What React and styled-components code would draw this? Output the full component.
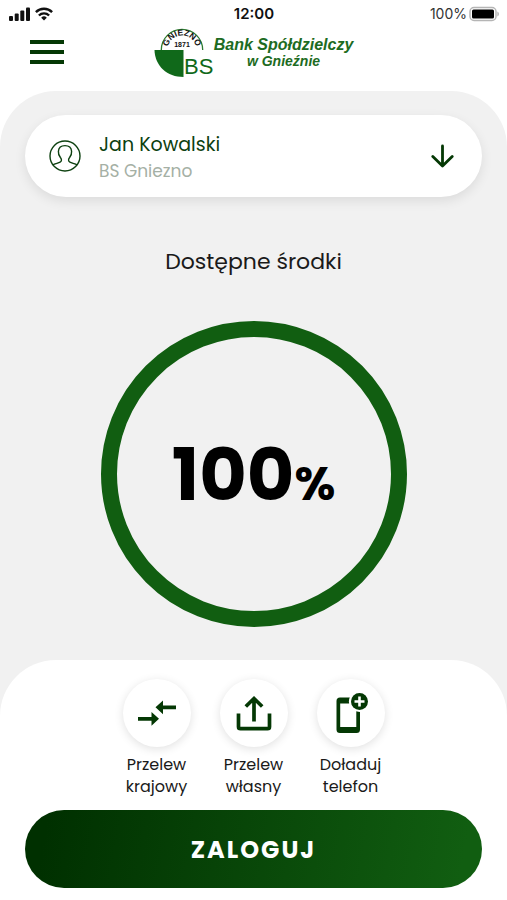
import React, { useState } from "react";
import styled, { createGlobalStyle } from "styled-components";

const GlobalStyle = createGlobalStyle`
  * {
    box-sizing: border-box;
  }
  body {
    margin: 0;
    background: #fff;
    color: #1a1a1a;
    font-family: Poppins, Inter, "Liberation Sans", sans-serif;
  }
  button {
    font-family: inherit;
    color: inherit;
    background: none;
    border: none;
    padding: 0;
    cursor: pointer;
  }
`;

const Screen = styled.div`
  display: flex;
  flex-direction: column;
  min-height: 100vh;
  background: #fff;
`;

const StatusBar = styled.div`
  display: grid;
  grid-template-columns: 1fr auto 1fr;
  align-items: center;
  height: 27px;
  padding: 0 7px 0 8px;
  font-family: Inter, sans-serif;
  font-size: 14px;
`;
const StatusGroup = styled.div`
  display: flex;
  align-items: center;
  gap: ${(props) => props.$gap};
  justify-content: ${(props) => props.$align || "flex-start"};
  color: #333;
`;
const Clock = styled.span`
  color: #111;
  font-size: 15px;
  font-weight: 600;
`;

const Header = styled.header`
  display: grid;
  grid-template-columns: 1fr auto 1fr;
  align-items: center;
  height: 64px;
  padding: 0 30px;
`;
const MenuButton = styled.button`
  display: flex;
  flex-direction: column;
  justify-content: space-between;
  width: 34px;
  height: 24px;
  margin-bottom: 14px;
`;
const MenuLine = styled.span`
  width: 100%;
  height: 4px;
  background: #043804;
`;
const Brand = styled.a`
  display: flex;
  align-items: center;
  margin-bottom: 12px;
  color: #1d6b22;
  text-decoration: none;
`;
const BrandName = styled.span`
  font-family: "Liberation Sans", Arial, sans-serif;
  font-weight: bold;
  font-style: italic;
  font-size: 16px;
  line-height: 16px;
  text-align: center;
`;
const BrandTown = styled.span`
  display: block;
  font-size: 14px;
`;

const Main = styled.main`
  flex: 1;
  display: flex;
  flex-direction: column;
  align-items: center;
  padding: 24px 25px 33px;
  background: #f1f1f1;
  border-radius: 56px 56px 0 0;
`;
const AccountButton = styled.button`
  display: flex;
  align-items: center;
  width: 100%;
  height: 82px;
  padding: 0 28px 0 24px;
  border-radius: 41px;
  background: #fff;
  box-shadow: 0 4px 12px rgba(0, 0, 0, 0.09);
  text-align: left;
`;
const AccountText = styled.span`
  flex: 1;
  display: flex;
  flex-direction: column;
  margin-left: 18px;
  padding-top: 3px;
  line-height: 27px;
`;
const Owner = styled.span`
  color: #0c400f;
  font-size: 19px;
`;
const BankName = styled.span`
  color: #a5b0a5;
  font-size: 17px;
`;

const Title = styled.h1`
  margin: 49px 0 43px;
  font-size: 22px;
  font-weight: 400;
  line-height: 32px;
`;
const Ring = styled.div`
  display: flex;
  align-items: center;
  justify-content: center;
  width: 306px;
  height: 306px;
  padding-top: 10px;
  border: 16px solid #115e11;
  border-radius: 50%;
  color: #000;
`;
const Amount = styled.span`
  font-size: 73px;
  font-weight: 700;
  line-height: 80px;
`;
const Percent = styled.span`
  font-size: 47px;
`;

const Panel = styled.footer`
  background: #f1f1f1;
`;
const PanelBody = styled.div`
  display: flex;
  flex-direction: column;
  gap: 12px;
  padding: 19px 25px 12px;
  background: #fff;
  border-radius: 56px 56px 0 0;
`;
const Actions = styled.nav`
  display: flex;
  justify-content: center;
  gap: 17px;
`;
const ActionButton = styled.button`
  display: flex;
  flex-direction: column;
  align-items: center;
  gap: 7px;
  width: 80px;
  font-size: 16px;
  line-height: 22px;
`;
const ActionIcon = styled.span`
  display: flex;
  align-items: center;
  justify-content: center;
  width: 68px;
  height: 68px;
  border-radius: 50%;
  background: #fff;
  color: #043804;
  box-shadow: 0 2px 10px rgba(0, 0, 0, 0.12);
`;
const LoginButton = styled.button`
  height: 78px;
  border-radius: 39px;
  background: linear-gradient(100deg, #003000 5%, #115e11 95%);
  color: #fff;
  font-size: 24px;
  font-weight: 700;
  letter-spacing: 2px;
`;

const SignalIcon = () => (
  <svg width="23" height="14" viewBox="0 0 23 14" fill="#111" aria-hidden="true">
    <rect x="1" y="9" width="4" height="5" rx="1" />
    <rect x="6.7" y="6.5" width="4" height="7.5" rx="1" />
    <rect x="12.3" y="3.5" width="4" height="10.5" rx="1" />
    <rect x="18" y="0.5" width="4" height="13.5" rx="1" />
  </svg>
);

const WifiIcon = () => (
  <svg width="18" height="14" viewBox="0 0 18 14" fill="none" stroke="#111" strokeWidth="2.4" aria-hidden="true">
    <path d="M0.9 5.1a11.6 11.6 0 0 1 16.2 0" />
    <path d="M3.9 8.5a7.3 7.3 0 0 1 10.2 0" />
    <path d="M9 13.6l-2.8-2.9a4 4 0 0 1 5.6 0z" fill="#111" stroke="none" />
  </svg>
);

const BatteryIcon = () => (
  <svg width="31" height="16" viewBox="0 0 31 16" aria-hidden="true">
    <rect x="1" y="1.5" width="26" height="13" rx="4" fill="#fff" stroke="#b5b5b5" strokeWidth="1.5" />
    <rect x="3" y="3.5" width="22" height="9" rx="1.5" fill="#000" />
    <path d="M28.5 5.5c1.6.8 1.6 4.2 0 5z" fill="#999" />
  </svg>
);

const LogoMark = () => (
  <svg width="60" height="50" viewBox="0 0 60 50" aria-hidden="true">
    <defs>
      <path id="logo-arc" d="M13.500 22a14.500 14.500 0 0 1 29 0" />
    </defs>
    <path d="M7.3 22a20.7 20.7 0 0 1 41.4 0" fill="none" stroke="#2b7a30" strokeWidth="1.3" />
    <path d="M0.5 22H29.5V49C13 49 1 38 0.5 22z" fill="#10691a" />
    <text fontFamily="Liberation Sans" fontWeight="bold" fontSize="8.500" fill="#111" textAnchor="middle">
      <textPath href="#logo-arc" startOffset="50%">GNIEZNO</textPath>
    </text>
    <text x="28" y="19" fontFamily="Liberation Sans" fontWeight="bold" fontSize="7" fill="#111" textAnchor="middle">
      1871
    </text>
    <text x="30" y="46" fontFamily="Liberation Sans" fontSize="22" fill="#10691a">
      BS
    </text>
  </svg>
);

const PersonIcon = () => (
  <svg width="32" height="32" viewBox="0 0 32 32" fill="none" stroke="#0c400f" strokeWidth="1.4" aria-hidden="true">
    <circle cx="16" cy="16" r="15" />
    <path d="M3.8 24.800c2.200-1.400 5.400-1.500 7.300-2.600 2-1.200 1.500-3.200.3-4.700-1.400-1.900-2.200-4.200-2-6.300.3-3.400 2.900-5.600 6.600-5.600s6.300 2.200 6.600 5.600c.2 2.100-.6 4.400-2 6.300-1.200 1.500-1.700 3.500.3 4.700 1.900 1.100 5.100 1.200 7.300 2.600" />
  </svg>
);

const ArrowDownIcon = () => (
  <svg width="24" height="24" viewBox="0 0 24 24" fill="none" stroke="#043804" strokeWidth="2.8" strokeLinecap="round" strokeLinejoin="round" aria-hidden="true">
    <path d="M12.500 2v20M2.800 12.500l9.700 9.500 9.700-9.500" />
  </svg>
);

const TransferIcon = () => (
  <svg width="38" height="28" viewBox="0 0 38 28" fill="currentColor" aria-hidden="true">
    <path d="M38 6.400v3.900H25v5L17.500 8.350 25 1.400v5z" />
    <path d="M0 17.900v3.900h13.500v5L21 19.850 13.500 12.900v5z" />
  </svg>
);

const ShareIcon = () => (
  <svg width="36" height="36" viewBox="0 0 36 36" fill="none" stroke="currentColor" strokeWidth="3.700" aria-hidden="true">
    <path d="M18 26.500V4M9.800 11.500L18 3.500l8.200 8" />
    <path d="M2.500 18.500v13.200q0 2 2 2h27q2 0 2-2V18.500" />
  </svg>
);

const TopUpIcon = () => (
  <svg width="34" height="42" viewBox="0 0 34 42" aria-hidden="true">
    <path
      d="M6 5.500h16.500a3.500 3.500 0 0 1 3.500 3.500v28.500a3.500 3.500 0 0 1-3.500 3.500H6a3.500 3.500 0 0 1-3.500-3.500V9A3.500 3.500 0 0 1 6 5.500zM6.200 11.500v23.500h16.100V11.500z"
      fill="currentColor"
      fillRule="evenodd"
    />
    <circle cx="25.500" cy="9.500" r="10.600" fill="#fff" />
    <circle cx="25.500" cy="9.500" r="8.500" fill="currentColor" />
    <path d="M25.500 4.500v10M20.500 9.500h10" stroke="#fff" strokeWidth="2.600" />
  </svg>
);

const actions = [
  { lines: ["Przelew", "krajowy"], Icon: TransferIcon },
  { lines: ["Przelew", "własny"], Icon: ShareIcon },
  { lines: ["Doładuj", "telefon"], Icon: TopUpIcon },
];

const App = () => {
  const [menuOpen, setMenuOpen] = useState(false);

  return (
    <Screen>
      <GlobalStyle />
      <StatusBar>
        <StatusGroup $gap="4px">
          <SignalIcon />
          <WifiIcon />
        </StatusGroup>
        <Clock>12:00</Clock>
        <StatusGroup $gap="2px" $align="flex-end">
          100%
          <BatteryIcon />
        </StatusGroup>
      </StatusBar>
      <Header>
        <MenuButton
          aria-label="Menu"
          aria-expanded={menuOpen}
          onClick={() => setMenuOpen((prev) => !prev)}
        >
          <MenuLine />
          <MenuLine />
          <MenuLine />
        </MenuButton>
        <Brand href="#">
          <LogoMark />
          <BrandName>
            Bank Spółdzielczy
            <BrandTown>w Gnieźnie</BrandTown>
          </BrandName>
        </Brand>
      </Header>
      <Main>
        <AccountButton>
          <PersonIcon />
          <AccountText>
            <Owner>Jan Kowalski</Owner>
            <BankName>BS Gniezno</BankName>
          </AccountText>
          <ArrowDownIcon />
        </AccountButton>
        <Title>Dostępne środki</Title>
        <Ring>
          <Amount>
            100<Percent>%</Percent>
          </Amount>
        </Ring>
      </Main>
      <Panel>
        <PanelBody>
          <Actions>
            {actions.map(({ lines, Icon }) => (
              <ActionButton key={lines.join(" ")}>
                <ActionIcon>
                  <Icon />
                </ActionIcon>
                <span>
                  {lines[0]}
                  <br />
                  {lines[1]}
                </span>
              </ActionButton>
            ))}
          </Actions>
          <LoginButton>ZALOGUJ</LoginButton>
        </PanelBody>
      </Panel>
    </Screen>
  );
};

export default App;
